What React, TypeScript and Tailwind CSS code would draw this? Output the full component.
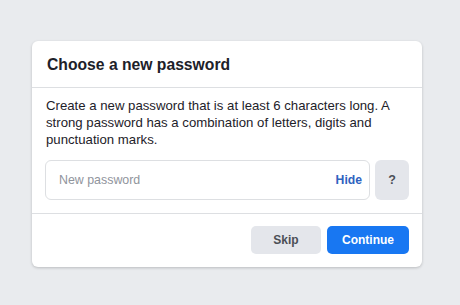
import { useState } from 'react'

export default function App() {
  const [hidden, setHidden] = useState(false)

  return (
    <div className="min-h-screen w-full bg-[#e9ebee] pt-[41px] font-['Liberation_Sans',Arial,sans-serif]">
      <div className="ml-[32px] w-[390px] rounded-[6px] bg-white shadow-[0_1px_3px_rgba(0,0,0,0.2)]">
        {/* Header */}
        <div className="flex h-[47px] items-center border-b border-[#dddfe2] px-[15px]">
          <h2 className="pt-[2px] text-[15.7px] font-bold text-[#1d2129]">Choose a new password</h2>
        </div>

        {/* Body */}
        <div className="px-[13px] pt-[9px] pb-[13px]">
          <p className="pl-[1px] text-[13.2px] leading-[17px] text-[#1d2129]">
            Create a new password that is at least 6 characters long. A strong password has a combination of letters, digits and punctuation marks.
          </p>
          <div className="mt-[12px] flex gap-[5px]">
            <div className="flex h-[40px] flex-1 items-center rounded-[6px] border border-[#dddfe2] pl-[13px] pr-[7px]">
              <input
                type={hidden ? 'password' : 'text'}
                placeholder="New password"
                className="min-w-0 flex-1 bg-transparent text-[12.4px] text-[#1d2129] outline-none placeholder:text-[#90949c]"
              />
              <button
                onClick={() => setHidden(h => !h)}
                className="text-[12.2px] font-bold text-[#2f63bf]"
              >
                Hide
              </button>
            </div>
            <button className="flex h-[40px] w-[34px] items-center justify-center rounded-[6px] bg-[#e4e6eb] text-[12.5px] font-bold text-[#4b4f56]">
              ?
            </button>
          </div>
        </div>

        {/* Footer */}
        <div className="flex justify-end gap-[6px] border-t border-[#dddfe2] px-[13px] pt-[12px] pb-[13px]">
          <button className="h-[28px] w-[70px] rounded-[5px] bg-[#e4e6eb] text-[12px] font-bold text-[#4b4f56]">
            Skip
          </button>
          <button className="h-[28px] w-[82px] rounded-[5px] bg-[#1877f2] text-[12px] font-bold text-white">
            Continue
          </button>
        </div>
      </div>
    </div>
  )
}
